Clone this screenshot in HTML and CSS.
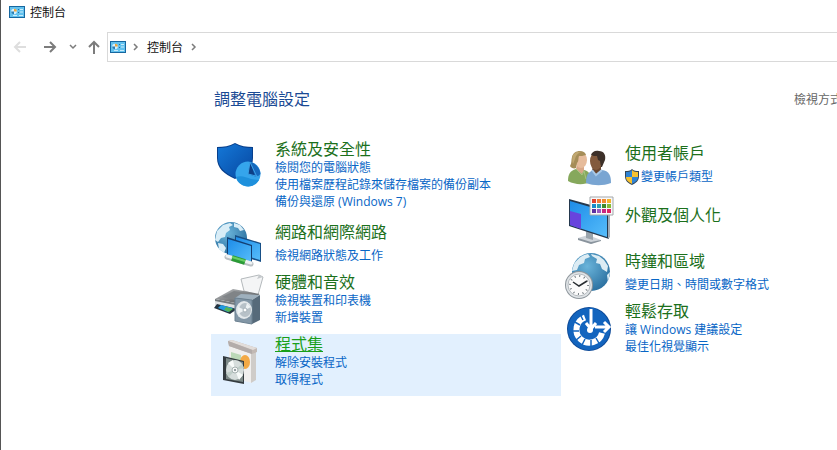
FILE: index.html
```html
<!doctype html>
<html lang="zh-Hant">
  <head>
    <meta charset="UTF-8" />
    <meta name="viewport" content="width=device-width, initial-scale=1" />
    <title>控制台</title>
    <link rel="stylesheet" href="styles.css" />
  </head>

  <body>
    <svg class="defs" aria-hidden="true">
      <defs>
        <linearGradient id="shield-blue" x1="0" y1="0" x2="1" y2="1">
          <stop offset="0" stop-color="#1478d8" />
          <stop offset="1" stop-color="#0747a0" />
        </linearGradient>
        <linearGradient id="screen" x1="0" y1="0" x2="1" y2="1">
          <stop offset="0" stop-color="#1d8ce8" />
          <stop offset="1" stop-color="#56bdfa" />
        </linearGradient>
        <radialGradient id="globe" cx="0.4" cy="0.35" r="0.7">
          <stop offset="0" stop-color="#6ab4da" />
          <stop offset="1" stop-color="#2a6f9f" />
        </radialGradient>
        <linearGradient id="printer" x1="0" y1="0" x2="1" y2="1">
          <stop offset="0" stop-color="#bfc2c4" />
          <stop offset="1" stop-color="#3e4144" />
        </linearGradient>
        <symbol id="panel" viewBox="0 0 16 12">
          <rect width="16" height="12" fill="#17679f" />
          <rect x="1" y="1" width="14" height="10" fill="#62c1ee" />
          <circle cx="5" cy="5.5" r="2.8" fill="#d8f0fb" />
          <path d="M5 5.500V2.7A2.8 2.8 0 0 1 7.8 5.500z" fill="#eda53a" />
          <path d="M5 5.500H2.200A2.8 2.8 0 0 0 5 8.300z" fill="#2a7fb5" />
          <path d="M11 3.5h3M11 6h3M4 9.5h4M10 9.5h4" stroke="#c9ecfb" />
          <path d="M9 3h1v1H9zM9 6h1v1H9z" fill="#1d72aa" />
        </symbol>
      </defs>
    </svg>

    <div class="window">
      <header class="titlebar">
        <svg class="panel-icon" aria-hidden="true"><use href="#panel" /></svg>
        <span>控制台</span>
      </header>

      <nav class="toolbar">
        <button class="nav-button back" aria-label="上一頁" disabled>
          <svg width="14" height="14" viewBox="0 0 14 14">
            <path d="M13 7H2M7 2L2 7l5 5" />
          </svg>
        </button>
        <button class="nav-button forward" aria-label="下一頁">
          <svg width="14" height="14" viewBox="0 0 14 14">
            <path d="M1 7h11M7 2l5 5-5 5" />
          </svg>
        </button>
        <button class="nav-button recent" aria-label="最近的位置">
          <svg width="8" height="6" viewBox="0 0 8 6">
            <path d="M1 1l3 3 3-3" />
          </svg>
        </button>
        <button class="nav-button up" aria-label="上移">
          <svg width="14" height="14" viewBox="0 0 14 14">
            <path d="M7 14V2M2 7l5-5 5 5" />
          </svg>
        </button>
        <div class="address">
          <svg class="panel-icon" aria-hidden="true"><use href="#panel" /></svg>
          <svg class="chevron" viewBox="0 0 6 8"><path d="M1 1l3 3-3 3" /></svg>
          <a href="#">控制台</a>
          <svg class="chevron" viewBox="0 0 6 8"><path d="M1 1l3 3-3 3" /></svg>
        </div>
      </nav>

      <main>
        <div class="heading">
          <h1>調整電腦設定</h1>
          <span class="view-by">檢視方式</span>
        </div>

        <div class="categories">
          <div class="column">
            <section class="category security">
              <svg class="icon" viewBox="0 0 48 48" aria-hidden="true">
                <path d="M3 6c7 0 12-1 18-4 6 3 11 4 18 4v11c0 10-7 16-18 21C10 33 3 27 3 17z" fill="#073f8c" />
                <path d="M4 7c7 0 11-1 17-4 6 3 10 4 17 4v10c0 9-7 15-17 20C11 32 4 26 4 17z" fill="url(#shield-blue)" />
                <circle cx="34" cy="33" r="12.5" fill="#35a5ec" />
                <path d="M22 36c5-2 10 0 15 2l8 1a12.5 12.5 0 0 1-23-3z" fill="#1e90dc" />
                <path d="M34 33l2-12c6 1 10 6 10.5 12L43 36z" fill="#1668bd" />
                <path d="M34 33l2-12 5 14z" fill="#0d3f86" />
                <path d="M34 33l2-12M34 33l12 3M36 21l7 15" fill="none" stroke="#3da2e6" />
              </svg>
              <div class="text">
                <h2><a href="#">系統及安全性</a></h2>
                <a href="#">檢閱您的電腦狀態</a>
                <a href="#">使用檔案歷程記錄來儲存檔案的備份副本</a>
                <a href="#">備份與還原 (Windows 7)</a>
              </div>
            </section>

            <section class="category network">
              <svg class="icon" viewBox="0 0 48 48" aria-hidden="true">
                <circle cx="17" cy="14" r="16" fill="url(#globe)" />
                <path d="M3 7l6-6 7-2 3 2-4 2 1 3-4 3-1 4-4 1-3 4-3-2zM20-1l6 2 4 5-4 1-2-3-4-1zM4 19l5 1 3 4-2 5-5-4z" fill="#d9edf7" />
                <path d="M21 11l26 8v19l-26-8z" fill="#174f86" />
                <path d="M22 13l24 7v16l-24-7z" fill="url(#screen)" />
                <path d="M13 13l25 8v19l-25-8z" fill="#133f72" />
                <path d="M14 15l23 7v16l-23-7z" fill="url(#screen)" />
                <path d="M13 33l24 7" stroke="#b9bfc3" stroke-width="5" stroke-linecap="round" />
                <path d="M13 32l24 7" stroke="#eff2f3" stroke-width="3" stroke-linecap="round" />
                <path d="M18 34l13 4" stroke="#2b9b36" stroke-width="6" />
                <path d="M18 33l13 4" stroke="#67cf63" stroke-width="2" />
              </svg>
              <div class="text">
                <h2><a href="#">網路和網際網路</a></h2>
                <a href="#">檢視網路狀態及工作</a>
              </div>
            </section>

            <section class="category hardware">
              <svg class="icon" viewBox="0 0 48 48" aria-hidden="true">
                <path d="M27 5l18-4 4 2-5 18-14-4z" fill="#f4f5f6" stroke="#b4b9bc" />
                <path d="M45 1l-2 4 6-2z" fill="#c5c9cc" />
                <path d="M1 25l18-10 27 5-20 10z" fill="url(#printer)" />
                <path d="M8 23l12-6 18 3-13 7z" fill="#808487" />
                <path d="M1 25l25 5v10L1 33z" fill="#dfe2e4" />
                <path d="M1 25l25 5v2L1 27z" fill="#74797c" />
                <path d="M3 30l20 5-7 5-16-6z" fill="#253441" />
                <path d="M7 31l12 3-5 4-10-4z" fill="#229be1" />
                <path d="M12 33l7 2-4 3-5-2z" fill="#55b456" />
                <path d="M21 24l6-4 19 1-8 5z" fill="#9eb0bd" />
                <path d="M38 26l8-5v25l-8 4z" fill="#566a7a" />
                <path d="M21 24l17 2v24l-17-3z" fill="#8296a6" stroke="#6b8090" />
                <ellipse cx="30" cy="36" rx="8" ry="9" fill="#e3e8eb" />
                <ellipse cx="31" cy="36" rx="6" ry="7" fill="#b7c1c8" />
                <path d="M31 36l-7-3v7zM31 36l2-7 4 4z" fill="#edf2f4" />
                <circle cx="31" cy="36" r="2" fill="#fff" stroke="#a4b0b8" />
              </svg>
              <div class="text">
                <h2><a href="#">硬體和音效</a></h2>
                <a href="#">檢視裝置和印表機</a>
                <a href="#">新增裝置</a>
              </div>
            </section>

            <section class="category programs selected">
              <svg class="icon" viewBox="0 0 48 48" aria-hidden="true">
                <path d="M15 10l23 7v30l-23-6z" fill="#f0efee" />
                <path d="M37 17l5-2v29l-5 3z" fill="#cfccc9" />
                <path d="M14 5l4-1 25 8v4l-5 2-23-8z" fill="#c2b9b4" />
                <path d="M14 5l4-1 25 8-4 2z" fill="#e2ddda" />
                <path d="M14 5l24 9v4l-23-8z" fill="#b3acaa" />
                <path d="M17 16l10 3v12l-10-2z" fill="#bcd8b8" />
                <ellipse cx="31" cy="26" rx="5" ry="7" fill="#f3a945" />
                <path d="M9 20l21 5v23l-21-4z" fill="#333a3e" />
                <path d="M12 22l17 4v20l-17-3z" fill="#7d8a88" />
                <ellipse cx="21" cy="34" rx="9" ry="10" fill="#d6dddc" />
                <path d="M21 34l-7-7 5-3zM21 34l8 5-4 5z" fill="#f7faf9" />
                <path d="M21 34l7-6 2 4zM21 34l-6 7-3-4z" fill="#bfcdc8" />
                <circle cx="21" cy="34" r="3" fill="#f6f7f7" stroke="#a6b2b1" />
                <circle cx="21" cy="34" r="1" fill="#738085" />
              </svg>
              <div class="text">
                <h2><a href="#">程式集</a></h2>
                <a href="#">解除安裝程式</a>
                <a href="#">取得程式</a>
              </div>
            </section>
          </div>

          <div class="column right">
            <section class="category users">
              <svg class="icon" viewBox="0 0 48 48" aria-hidden="true">
                <path d="M4 36c0-7 2-10 8-12l8 1c5 1 7 4 7 12-7 3-16 3-23-1z" fill="#86a85c" />
                <path d="M13 20h7v5l-2 4-6-5z" fill="#d9a888" />
                <ellipse cx="17" cy="15" rx="6" ry="8" fill="#e6bc9c" />
                <path d="M22 10c-3 1-5 1-7 1-1 3 0 5-2 7l-1 5c-2 1-5 0-6-2 2-3 1-6 2-9 1-4 4-6 8-6 3 0 5 1 6 4z" fill="#a58d58" />
                <path d="M9 10c2-3 5-4 8-3-3 1-5 3-6 7l-2 5c-1-3-1-6 0-9z" fill="#c0a770" />
                <path d="M12 24l6 6 2-4 2 8" fill="none" stroke="#a6c383" />
                <path d="M22 38c0-8 2-11 8-13h8c7 1 9 5 9 13-8 3-17 3-25 0z" fill="#79a5d2" />
                <path d="M29 21h8v5l-5 4-4-5z" fill="#69462f" />
                <ellipse cx="32" cy="16" rx="6" ry="9" fill="#835a3d" />
                <path d="M27 10c1-3 4-5 8-4 5 0 7 4 6 9l-3 7h-1l-1-6-2-1-1-4c-2 0-4 0-6-1z" fill="#3d3029" />
                <path d="M28 25l4 5 6-5" fill="none" stroke="#a7c8e8" stroke-width="2" />
              </svg>
              <div class="text">
                <h2><a href="#">使用者帳戶</a></h2>
                <a class="with-shield" href="#">
                  <svg width="14" height="16" viewBox="0 0 14 16" aria-hidden="true">
                    <path d="M0 2c3 0 5 0 7-2 2 2 4 2 7 2v5c0 5-3 7-7 9-4-2-7-4-7-9z" fill="#344657" />
                    <path d="M1 3c2 0 4 0 6-2v7H1z" fill="#2f83d4" />
                    <path d="M7 1c2 2 4 2 6 2v5H7z" fill="#f7c12f" />
                    <path d="M1 8h6v7c-3-2-6-3-6-7z" fill="#f7c12f" />
                    <path d="M7 8h6c0 4-3 5-6 7z" fill="#2f83d4" />
                  </svg>
                  <span>變更帳戶類型</span>
                </a>
              </div>
            </section>

            <section class="category appearance">
              <svg class="icon" viewBox="0 0 48 48" aria-hidden="true">
                <path d="M14 41l10-3 13 5-10 4z" fill="#ced4da" />
                <path d="M14 41l13 4 10-2v1l-10 3-13-4z" fill="#8a949d" />
                <path d="M22 34l7 2v7l-7-2z" fill="#9aa4ac" />
                <path d="M5 2l40 11v29L5 29z" fill="#24384d" />
                <path d="M44 13l2-1v28l-2 2z" fill="#9faab4" />
                <path d="M6 4l37 11v25L6 28z" fill="url(#screen)" />
                <path d="M6 14l11 3v15L6 28z" fill="#6844dd" />
                <path d="M26 0h23v18H26z" fill="#f8f8f8" stroke="#a2a7ab" />
                <path d="M28 2h4v4h-4z" fill="#e1422e" />
                <path d="M33 2h4v4h-4z" fill="#f37b32" />
                <path d="M38 2h4v4h-4z" fill="#f08a30" />
                <path d="M43 2h4v4h-4z" fill="#f3b42d" />
                <path d="M28 7h4v4h-4z" fill="#188bc9" />
                <path d="M33 7h4v4h-4z" fill="#2d9fae" />
                <path d="M38 7h4v4h-4z" fill="#3f8a2c" />
                <path d="M43 7h4v4h-4z" fill="#82bd36" />
                <path d="M28 12h4v4h-4z" fill="#5d31a0" />
                <path d="M33 12h4v4h-4z" fill="#9a5ac0" />
                <path d="M38 12h4v4h-4z" fill="#c8267f" />
                <path d="M43 12h4v4h-4z" fill="#dc2462" />
              </svg>
              <div class="text">
                <h2><a href="#">外觀及個人化</a></h2>
              </div>
            </section>

            <section class="category clock">
              <svg class="icon" viewBox="0 0 48 48" aria-hidden="true">
                <circle cx="27" cy="19" r="19" fill="url(#globe)" />
                <path d="M10 11c5-7 9-9 14-10l2 3-5 2-1 4-5 2-2 5-5 1zM27 1l8 2 5 4 4 6-1 6-5-3-2-5-4-1 1-4-5-3zM43 22l3-3-2 10z" fill="#dcecf4" />
                <circle cx="15" cy="32" r="14" fill="#8e969c" />
                <circle cx="15" cy="32" r="13" fill="#dfe3e6" />
                <circle cx="15" cy="32" r="11" fill="#fafafa" stroke="#b4babf" />
                <circle cx="15" cy="32" r="9" fill="none" stroke="#6f777d" stroke-width="2" stroke-dasharray="1 3.712" />
                <path d="M9 29l6 4 8-5" fill="none" stroke="#272c30" stroke-width="1.5" />
              </svg>
              <div class="text">
                <h2><a href="#">時鐘和區域</a></h2>
                <a href="#">變更日期、時間或數字格式</a>
              </div>
            </section>

            <section class="category access">
              <svg class="icon" viewBox="0 0 48 48" aria-hidden="true">
                <circle cx="25" cy="26" r="22" fill="#0d4a98" />
                <circle cx="25" cy="26" r="21" fill="#1264be" />
                <path d="M21 14.500A13 13 0 1 0 38 30" fill="none" stroke="#fff" stroke-width="6" />
                <path d="M19 17L16 11M16 22l-7-4M15 28H8M17 33l-6 5M21 36l-4 8M27 37v8M32 35l4 7" stroke="#1264be" stroke-width="1.5" />
                <circle cx="26" cy="27" r="3" fill="#fff" />
                <path d="M27 5v19M29 24h14" stroke="#1264be" stroke-width="7" />
                <path d="M27 6v19M22 20l5 6 5-6" fill="none" stroke="#fff" stroke-width="3" />
                <path d="M31 24h13M40 19l5 5-5 5" fill="none" stroke="#fff" stroke-width="3" />
              </svg>
              <div class="text">
                <h2><a href="#">輕鬆存取</a></h2>
                <a href="#">讓 Windows 建議設定</a>
                <a href="#">最佳化視覺顯示</a>
              </div>
            </section>
          </div>
        </div>
      </main>
    </div>
  </body>
</html>
```

FILE: styles.css
```css
* {
  box-sizing: border-box;
}

body {
  margin: 0;
  background: white;
  color: #111;
  font: 12px/17px "Open Sans", "Noto Sans CJK TC", sans-serif;
  overflow: hidden;
}

a {
  color: #0866c6;
  text-decoration: none;
}

a:hover {
  text-decoration: underline;
}

.defs {
  position: absolute;
  width: 0;
  height: 0;
}

.window {
  min-height: 100vh;
  border-left: 1px solid #555;
}

.titlebar {
  display: flex;
  align-items: center;
  gap: 5px;
  height: 24px;
  padding-left: 8px;
}

.panel-icon {
  width: 16px;
  height: 12px;
}

.toolbar {
  display: flex;
  align-items: center;
  height: 46px;
}

.nav-button {
  display: flex;
  flex: none;
  align-items: center;
  justify-content: center;
  width: 30px;
  height: 28px;
  padding: 0;
  border: 0;
  background: none;
}

.nav-button path,
.chevron path {
  fill: none;
  stroke: #7c7c7c;
  stroke-width: 2;
}

.nav-button.back {
  margin-left: 4px;
}

.nav-button.back path {
  stroke: #dedede;
}

.nav-button.recent {
  width: 16px;
}

.nav-button.recent path,
.chevron path {
  stroke-width: 1.5;
}

.nav-button.up {
  width: 26px;
}

.address {
  display: flex;
  flex: 1;
  align-items: center;
  height: 30px;
  padding-left: 2px;
  border: 1px solid #d9d9d9;
  border-right: 0;
}

.address a {
  margin: 0 8px;
  color: #111;
}

.chevron {
  width: 6px;
  height: 8px;
}

.address .panel-icon + .chevron {
  margin-left: 7px;
}

main {
  width: 700px;
  margin-left: 210px;
}

.heading {
  display: flex;
  align-items: center;
  justify-content: space-between;
  padding: 19px 69px 30px 3px;
}

h1,
h2 {
  margin: 0;
  font-size: 16px;
  font-weight: normal;
  line-height: 20px;
}

h1 {
  color: #1a4a94;
}

h2 a {
  color: #1c701c;
}

.view-by {
  color: #666;
}

.categories {
  display: grid;
  grid-template-columns: 1fr 1fr;
}

.column.right {
  padding-top: 4px;
}

.category {
  display: flex;
  align-items: flex-start;
  gap: 13px;
  padding-left: 3px;
}

.icon {
  flex: none;
  width: 48px;
  height: 48px;
  margin-top: 2px;
  overflow: visible;
}

.text {
  display: flex;
  flex-direction: column;
  align-items: flex-start;
  padding-bottom: 8px;
}

.security .text {
  padding-bottom: 12px;
}

.network h2,
.users h2,
.clock h2 {
  margin-bottom: 5px;
}

.users {
  margin-bottom: 2px;
}

.appearance {
  margin-bottom: 6px;
}

.appearance .text {
  padding-top: 10px;
}

.with-shield {
  display: flex;
  align-items: center;
  gap: 2px;
}

.selected {
  background: #e2f0fe;
}

.selected h2 a {
  color: #199f19;
  text-decoration: underline;
}
```
